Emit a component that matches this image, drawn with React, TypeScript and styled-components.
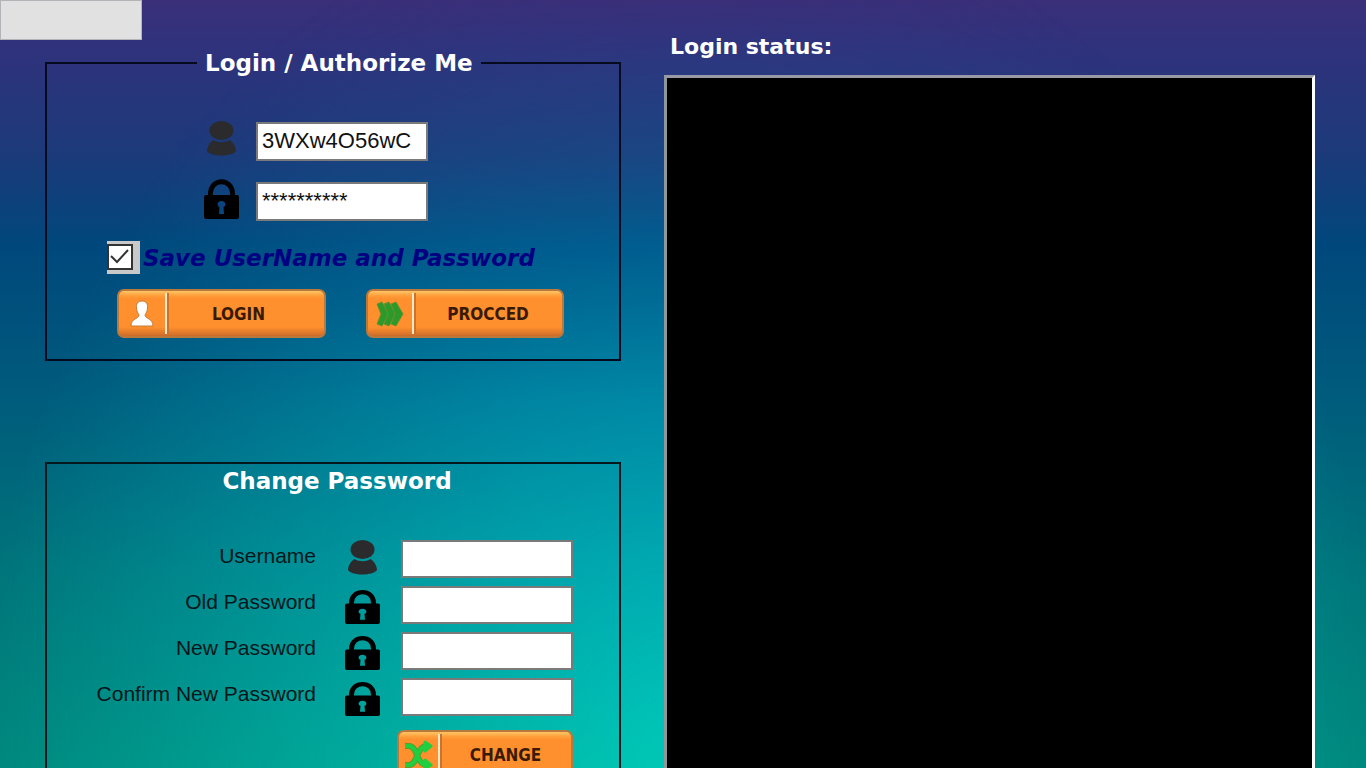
import React from "react";
import styled, { createGlobalStyle } from "styled-components";

const headingFont = `"DejaVu Sans", Verdana, sans-serif`;
const bodyFont = `"Liberation Sans", Arial, sans-serif`;
const buttonFont = `"DejaVu Sans Condensed", "DejaVu Sans", sans-serif`;

const GlobalStyle = createGlobalStyle`
  * { box-sizing: border-box; }
  html { scrollbar-width: none; }
  body { margin: 0; background: #00857c; font-family: ${bodyFont}; }
`;

const Page = styled.div`
  position: relative;
  isolation: isolate;
  display: grid;
  grid-template-columns: minmax(600px, 621fr) minmax(300px, 651fr);
  column-gap: 43px;
  height: 100vh;
  padding-right: 51px;
  overflow: hidden;
  background: linear-gradient(#3a2f79 0%, #30327c 6%, #1c3a7a 20%, #00487c 32%, #005c7c 52%, #00757a 75%, #00877c 100%);

  /* bright glow rising from the bottom centre */
  &::before {
    content: "";
    position: absolute;
    inset: 0;
    z-index: -1;
    background: linear-gradient(#38307a 0%, #264a8e 8%, #185f98 20%, #007dab 33%, #00a4bf 52%, #00b5be 72%, #00c6b4 100%);
    mask-image: radial-gradient(ellipse 52% 115% at 50% 100%, #000 5%, transparent 100%);
  }
`;

const LeftColumn = styled.div`
  display: flex;
  flex-direction: column;
`;

const BlankButton = styled.button`
  width: 142px;
  height: 40px;
  flex: none;
  border: 1px solid #b4b4b8;
  background: #e1e1e1;
`;

const LoginPanel = styled.fieldset`
  min-width: 0;
  margin: 9px 0 0 45px;
  padding: 44px 0 21px;
  border: 2px solid #050a1e;
`;

const Legend = styled.legend`
  margin-left: 150px;
  padding: 0 8px;
  color: #fff;
  font: bold 23px/28px ${headingFont};
`;

const Credentials = styled.div`
  display: grid;
  grid-template-columns: 35px 172px;
  column-gap: 17px;
  row-gap: 18px;
  align-items: center;
  padding-left: 157px;
`;

const IconLabel = styled.label`
  display: flex;
  padding-bottom: 4px;
`;

const TextInput = styled.input<{ $short?: boolean }>`
  width: 172px;
  height: ${(p) => (p.$short ? 38 : 39)}px;
  padding: 0 4px;
  border: 2px solid #7a7a7a;
  border-radius: 0;
  background: #fff;
  color: #111;
  font: 22px ${bodyFont};
`;

const SaveRow = styled.label`
  display: flex;
  align-items: center;
  gap: 3px;
  height: 33px;
  margin: 18px 0 15px 60px;
  color: #000080;
  font: italic bold 23px/28px ${headingFont};
  white-space: nowrap;
`;

const CheckHolder = styled.span`
  display: grid;
  width: 33px;
  height: 33px;
  padding: 3px 0;
  background: #c8c8c8;
  > * { grid-area: 1 / 1; }
`;

const Checkbox = styled.input`
  appearance: none;
  width: 26px;
  height: 26px;
  margin: 0;
  border: 2px solid #333;
  background: #fff;
  & + svg { pointer-events: none; visibility: hidden; }
  &:checked + svg { visibility: visible; }
`;

const ButtonRow = styled.div`
  display: flex;
  gap: 40px;
  padding-left: 70px;
`;

const OrangeButton = styled.button<{ $width: number; $iconWidth: number }>`
  display: grid;
  grid-template-columns: ${(p) => p.$iconWidth}px 1fr;
  align-items: center;
  width: ${(p) => p.$width}px;
  height: 49px;
  padding: 0;
  border: 2px solid #b9783c;
  border-radius: 7px;
  background: linear-gradient(#ffc566 0, #ff9c38 5px, #ff902d 8px, #ff902d 36px, #d9742b 43px, #c96a2a 100%);
  color: #3a1a05;
  font: bold 17px/24px ${buttonFont};
`;

const ButtonIcon = styled.span`
  display: grid;
  place-items: center;
  height: 41px;
  border-right: 2px solid #ffe9c8;
  box-shadow: 2px 0 0 #c8742c;
`;

const ButtonText = styled.span<{ $shift?: number }>`
  padding-right: ${(p) => p.$shift || 0}px;
  text-align: center;
`;

const ChangePanel = styled.section`
  flex: none;
  margin: 101px 0 0 45px;
  padding: 3px 46px 20px 0;
  border: 2px solid #05181e;
`;

const PanelTitle = styled.h2`
  margin: 0 0 45px;
  padding-left: 54px;
  color: #fff;
  font: bold 23px/28px ${headingFont};
  text-align: center;
`;

const ChangeGrid = styled.div`
  display: grid;
  grid-template-columns: 1fr 35px 172px;
  column-gap: 21px;
  row-gap: 8px;
  align-items: center;
`;

const FieldLabel = styled.label`
  padding: 0 8px 6px 0;
  color: #06161a;
  font: 21px/24px ${bodyFont};
  text-align: right;
`;

const ChangeActions = styled.div`
  display: flex;
  justify-content: flex-end;
  margin-top: 14px;
`;

const RightColumn = styled.div`
  display: flex;
  flex-direction: column;
  padding-top: 33px;
`;

const StatusTitle = styled.h2`
  margin: 0 0 14px 6px;
  color: #fff;
  font: bold 22px/28px ${headingFont};
`;

const StatusBox = styled.div`
  flex: 1;
  border: solid;
  border-width: 3px 3px 0;
  border-color: #9a9aa6 #fff #fff #8d979c;
  background: #000;
`;

const UserSvg = styled.svg`
  align-self: start;
`;

const LockSvg = styled.svg`
  align-self: end;
`;

function UserIcon() {
  return (
    <UserSvg width="35" height="36" viewBox="0 0 35 36" fill="#2b2b2e" aria-hidden="true">
      <ellipse cx="17.500" cy="9.500" rx="12" ry="9.500" />
      <path d="M9.500 19C14 22 21 22 25.500 19C29 21 32 26 32 30C28 36 7 36 3 30C3 26 6 21 9.500 19Z" />
    </UserSvg>
  );
}

function LockIcon({ height = 34 }: { height?: number }) {
  return (
    <LockSvg width="35" height={height} viewBox="0 0 35 40" preserveAspectRatio="none" aria-hidden="true">
      <path d="M6.500 19V15C6.500 -1.500 28.500 -1.500 28.500 15V19" fill="none" stroke="#000" strokeWidth="5" />
      <path
        fillRule="evenodd"
        d="M2 16H33Q35 16 35 18V38Q35 40 33 40H2Q0 40 0 38V18Q0 16 2 16ZM17.500 22C13 22 12.500 27 15.500 28L15 35H20L19.500 28C22.500 27 22 22 17.500 22Z"
      />
    </LockSvg>
  );
}

function PersonGlyph() {
  return (
    <svg width="24" height="28" viewBox="0 0 24 28" aria-hidden="true">
      <path
        d="M12 1C7.500 1 6 4 6.500 8C6.500 11 8 13 9 15C9 19 1 18 1 26H23C23 18 15 19 15 15C16 13 17.500 11 17.500 8C18 4 16.500 1 12 1Z"
        fill="#fff"
        stroke="#c97a35"
        strokeWidth="1"
      />
    </svg>
  );
}

function ArrowsGlyph() {
  return (
    <svg width="28" height="26" viewBox="0 0 28 26" fill="#2b9a2b" stroke="#6f8f2b" strokeWidth="1" strokeLinejoin="round" aria-hidden="true">
      <path d="M1 3L6 1L13 13L6 25L1 23L5 13Z" />
      <path d="M8 3L13 1L20 13L13 25L8 23L12 13Z" />
      <path d="M15 3L20 1L27 13L20 25L15 23L19 13Z" />
    </svg>
  );
}

function ShuffleGlyph() {
  return (
    <svg width="30" height="30" viewBox="0 0 30 30" aria-hidden="true">
      <g fill="none" stroke="#5f9a2b" strokeWidth="6">
        <path d="M1 6H5C14 6 12 25 23 25M1 25H5C14 25 12 6 23 6" />
      </g>
      <g fill="none" stroke="#1fcf3f" strokeWidth="4">
        <path d="M1 6H5C14 6 12 25 23 25M1 25H5C14 25 12 6 23 6" />
      </g>
      <path d="M21 2L27 6L21 11ZM21 20L27 25L21 29Z" fill="#1fcf3f" stroke="#1fcf3f" strokeWidth="3" strokeLinejoin="round" />
    </svg>
  );
}

const passwordFields = [
  { id: "old-password", label: "Old Password" },
  { id: "new-password", label: "New Password" },
  { id: "confirm-password", label: "Confirm New Password" },
];

export default function App() {
  return (
    <Page>
      <GlobalStyle />
      <LeftColumn>
        <BlankButton type="button" />
        <LoginPanel>
          <Legend>Login / Authorize Me</Legend>
          <Credentials>
            <IconLabel htmlFor="login-user"><UserIcon /></IconLabel>
            <TextInput id="login-user" defaultValue="3WXw4O56wC" />
            <IconLabel htmlFor="login-password"><LockIcon height={40} /></IconLabel>
            <TextInput id="login-password" autoComplete="off" defaultValue="**********" />
          </Credentials>
          <SaveRow>
            <CheckHolder>
              <Checkbox type="checkbox" defaultChecked />
              <svg width="26" height="26" viewBox="0 0 26 26" fill="none" stroke="#333" strokeWidth="2" aria-hidden="true">
                <path d="M4 12L10 18L21 6" />
              </svg>
            </CheckHolder>
            Save UserName and Password
          </SaveRow>
          <ButtonRow>
            <OrangeButton type="button" $width={209} $iconWidth={48}>
              <ButtonIcon><PersonGlyph /></ButtonIcon>
              <ButtonText $shift={14}>LOGIN</ButtonText>
            </OrangeButton>
            <OrangeButton type="button" $width={198} $iconWidth={46}>
              <ButtonIcon><ArrowsGlyph /></ButtonIcon>
              <ButtonText>PROCCED</ButtonText>
            </OrangeButton>
          </ButtonRow>
        </LoginPanel>
        <ChangePanel>
          <PanelTitle>Change Password</PanelTitle>
          <ChangeGrid>
            <FieldLabel htmlFor="change-user">Username</FieldLabel>
            <UserIcon />
            <TextInput id="change-user" $short />
            {passwordFields.map((field) => (
              <React.Fragment key={field.id}>
                <FieldLabel htmlFor={field.id}>{field.label}</FieldLabel>
                <LockIcon />
                <TextInput id={field.id} type="password" $short />
              </React.Fragment>
            ))}
          </ChangeGrid>
          <ChangeActions>
            <OrangeButton type="button" $width={176} $iconWidth={41}>
              <ButtonIcon><ShuffleGlyph /></ButtonIcon>
              <ButtonText>CHANGE</ButtonText>
            </OrangeButton>
          </ChangeActions>
        </ChangePanel>
      </LeftColumn>
      <RightColumn>
        <StatusTitle>Login status:</StatusTitle>
        <StatusBox role="log" aria-label="Login status" />
      </RightColumn>
    </Page>
  );
}
